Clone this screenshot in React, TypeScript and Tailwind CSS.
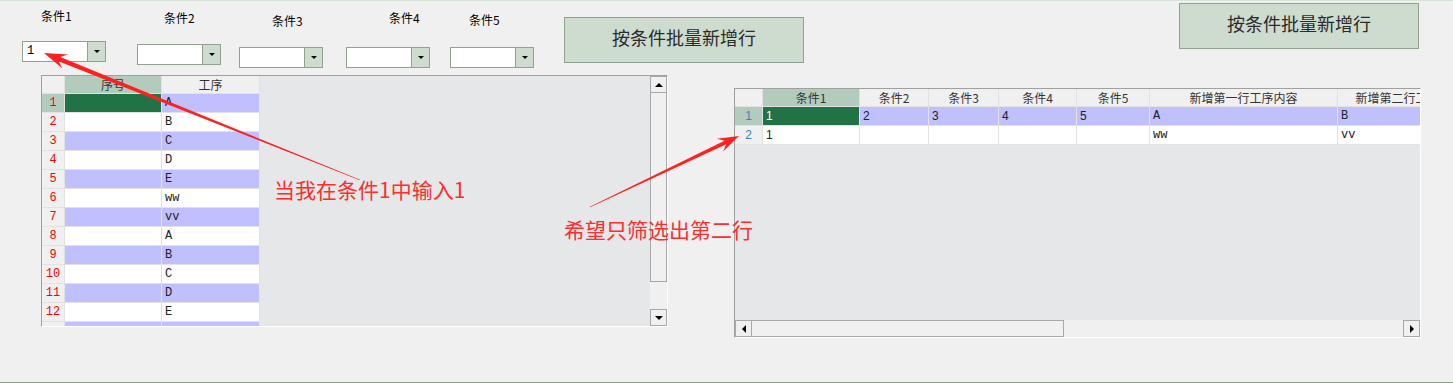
import React from 'react';

const cjk = "font-['Noto_Sans_CJK_SC','Liberation_Sans',sans-serif]";
const mono = "font-['Liberation_Mono','Noto_Sans_CJK_SC',monospace]";
const sans = "font-['Liberation_Sans','Noto_Sans_CJK_SC',sans-serif]";

// tapered annotation arrow, thin at the tail and thick near the head
function arrowPoints(x1: number, y1: number, x2: number, y2: number, tailW: number, shaftW: number, headLen: number, headW: number) {
  const len = Math.hypot(x2 - x1, y2 - y1);
  const ux = (x2 - x1) / len;
  const uy = (y2 - y1) / len;
  const nx = -uy;
  const ny = ux;
  const neck = headLen * 0.72;
  const pts = [
    [x1 + (nx * tailW) / 2, y1 + (ny * tailW) / 2],
    [x2 - ux * neck + (nx * shaftW) / 2, y2 - uy * neck + (ny * shaftW) / 2],
    [x2 - ux * headLen + (nx * headW) / 2, y2 - uy * headLen + (ny * headW) / 2],
    [x2, y2],
    [x2 - ux * headLen - (nx * headW) / 2, y2 - uy * headLen - (ny * headW) / 2],
    [x2 - ux * neck - (nx * shaftW) / 2, y2 - uy * neck - (ny * shaftW) / 2],
    [x1 - (nx * tailW) / 2, y1 - (ny * tailW) / 2],
  ];
  return pts.map((p) => p.map((v) => v.toFixed(1)).join(',')).join(' ');
}

const Combo: React.FC<{ value?: string }> = ({ value }) => (
  <div className="flex h-[21px] w-[84px] border border-[#8fa38f] bg-white">
    <div className={`flex-1 pl-[4px] text-[12px] leading-[19px] text-black ${mono}`}>{value}</div>
    <div className="flex w-[18px] items-center justify-center border-l border-[#8fa38f] bg-[#cedcd0]">
      <span className="border-x-[3px] border-t-[3px] border-x-transparent border-t-black" />
    </div>
  </div>
);

const Field: React.FC<{ label: string; value?: string; box: string; lab: string; combo: string }> = ({ label, value, box, lab, combo }) => (
  <div className={`flex w-[84px] shrink-0 flex-col ${box}`}>
    <span className={`whitespace-nowrap text-[12px] leading-[12px] text-black ${cjk} ${lab}`}>{label}</span>
    <div className={combo}>
      <Combo value={value} />
    </div>
  </div>
);

const BigButton: React.FC<{ className: string }> = ({ className }) => (
  <button
    className={`flex h-[46px] w-[240px] shrink-0 items-center justify-center border border-[#8fa38f] bg-[#cedcd0] pb-[6px] text-[18px] text-[#2b2b2b] ${cjk} ${className}`}
  >
    按条件批量新增行
  </button>
);

const Up = () => <span className="border-x-[4px] border-b-[4px] border-x-transparent border-b-black" />;
const Down = () => <span className="border-x-[4px] border-t-[4px] border-x-transparent border-t-black" />;
const Left = () => <span className="border-y-[4px] border-r-[4px] border-y-transparent border-r-black" />;
const Right = () => <span className="border-y-[4px] border-l-[4px] border-y-transparent border-l-black" />;

const VScroll = () => (
  <div className="flex w-[17px] shrink-0 flex-col bg-[#f0f0f0]">
    <div className="flex h-[17px] items-center justify-center border border-[#a8a8a8]">
      <Up />
    </div>
    <div className="h-[189px] border-x border-b border-[#a8a8a8]" />
    <div className="flex-1" />
    <div className="flex h-[17px] items-center justify-center border border-[#a8a8a8]">
      <Down />
    </div>
  </div>
);

const HScroll = () => (
  <div className="flex h-[17px] shrink-0 bg-[#f0f0f0]">
    <div className="flex w-[17px] items-center justify-center border border-[#a8a8a8]">
      <Left />
    </div>
    <div className="w-[312px] border-y border-r border-[#a8a8a8]" />
    <div className="flex-1" />
    <div className="flex w-[17px] items-center justify-center border border-[#a8a8a8]">
      <Right />
    </div>
  </div>
);

const HeadCell: React.FC<{ w: string; sel?: boolean; children?: React.ReactNode }> = ({ w, sel, children }) => (
  <div
    className={`flex h-full shrink-0 items-center justify-center overflow-hidden whitespace-nowrap border-r border-b border-[#e2e2e2] text-[12px] text-[#333] ${cjk} ${w} ${
      sel ? 'bg-[#b3cbbd]' : 'bg-[#f0f0f0]'
    }`}
  >
    {children}
  </div>
);

const Cell: React.FC<{ w: string; bg: string; children?: React.ReactNode }> = ({ w, bg, children }) => {
  const digit = /^[0-9]+$/.test(children as string);
  return (
    <div
      className={`flex h-full shrink-0 items-center overflow-hidden whitespace-nowrap border-r border-b border-[#e2e2e2] pl-[3px] ${w} ${bg} ${
        digit ? `text-[12px] ${sans}` : `text-[12px] ${mono}`
      } ${bg === 'bg-[#217346]' ? 'text-white' : 'text-[#222]'}`}
    >
      {children}
    </div>
  );
};

// the 13th row only peeks in at the bottom edge, so it shows no text
const leftRows = ['A', 'B', 'C', 'D', 'E', 'ww', 'vv', 'A', 'B', 'C', 'D', 'E', ''];

const LeftGrid = () => (
  <div className="ml-[41px] flex h-[252px] w-[627px] shrink-0 border border-[#a0a0a0] border-r-white border-b-white">
    <div className="flex-1 overflow-hidden bg-[#e6e7e9]">
      <div className="flex h-[18px]">
        <HeadCell w="w-[23px]" />
        <HeadCell w="w-[97px]" sel>
          序号
        </HeadCell>
        <HeadCell w="w-[98px]">工序</HeadCell>
      </div>
      {leftRows.map((v, i) => {
        const bg = i % 2 === 0 ? 'bg-[#c0c0ff]' : 'bg-white';
        return (
          <div key={i} className="flex h-[19px]">
            <div
              className={`flex h-full w-[23px] shrink-0 items-center justify-center border-r border-b border-[#e2e2e2] text-[12px] text-[#ff0000] ${mono} ${
                i === 0 ? 'bg-[#b3cbbd]' : 'bg-[#f0f0f0]'
              }`}
            >
              {i < 12 ? i + 1 : ''}
            </div>
            <Cell w="w-[97px]" bg={i === 0 ? 'bg-[#217346]' : bg} />
            <Cell w="w-[98px]" bg={bg}>
              {v}
            </Cell>
          </div>
        );
      })}
    </div>
    <VScroll />
  </div>
);

const rightCols = [
  { name: '条件1', w: 'w-[97px]' },
  { name: '条件2', w: 'w-[69px]' },
  { name: '条件3', w: 'w-[70px]' },
  { name: '条件4', w: 'w-[78px]' },
  { name: '条件5', w: 'w-[73px]' },
  { name: '新增第一行工序内容', w: 'w-[188px]' },
  { name: '新增第二行工序内容', w: 'w-[144px]' },
];

const rightRows = [
  ['1', '2', '3', '4', '5', 'A', 'B'],
  ['1', '', '', '', '', 'ww', 'vv'],
];

const RightGrid = () => (
  <div className="ml-[66px] mt-[13px] flex h-[250px] w-[687px] shrink-0 flex-col border border-[#a0a0a0] border-r-white border-b-white">
    <div className="flex-1 overflow-hidden bg-[#e6e7e9]">
      <div className="flex h-[18px]">
        <HeadCell w="w-[28px]" />
        {rightCols.map((c, i) => (
          <HeadCell key={c.name} w={c.w} sel={i === 0}>
            {c.name}
          </HeadCell>
        ))}
      </div>
      {rightRows.map((row, r) => {
        const bg = r === 0 ? 'bg-[#c0c0ff]' : 'bg-white';
        return (
          <div key={r} className="flex h-[19px]">
            <div
              className={`flex h-full w-[28px] shrink-0 items-center justify-center border-r border-b border-[#e2e2e2] text-[12px] text-[#3f7fbf] ${sans} ${
                r === 0 ? 'bg-[#b3cbbd]' : 'bg-[#f0f0f0]'
              }`}
            >
              {r + 1}
            </div>
            {row.map((v, c) => (
              <Cell key={c} w={rightCols[c].w} bg={r === 0 && c === 0 ? 'bg-[#217346]' : bg}>
                {v}
              </Cell>
            ))}
          </div>
        );
      })}
    </div>
    <HScroll />
  </div>
);

export default function App() {
  return (
    <div className="relative h-[383px] w-[1453px] overflow-hidden border-t border-b border-t-[#d9e5d9] border-b-[#8a9f8a] bg-[#f0f0f0]">
      <div className="flex h-[74px] items-start">
        <Field label="条件1" value="1" box="ml-[22px]" lab="ml-[19px] mt-[9px]" combo="mt-[19px]" />
        <Field label="条件2" box="ml-[31px]" lab="ml-[27px] mt-[11px]" combo="mt-[20px]" />
        <Field label="条件3" box="ml-[18px]" lab="ml-[33px] mt-[14px]" combo="mt-[20px]" />
        <Field label="条件4" box="ml-[23px]" lab="ml-[43px] mt-[11px]" combo="mt-[23px]" />
        <Field label="条件5" box="ml-[20px]" lab="ml-[19px] mt-[13px]" combo="mt-[21px]" />
        <BigButton className="ml-[30px] mt-[16px]" />
        <BigButton className="ml-[375px] mt-[2px]" />
      </div>

      <div className="flex items-start">
        <LeftGrid />
        <RightGrid />
      </div>

      <svg className="pointer-events-none absolute left-0 -top-px" width="1453" height="383">
        <polygon points={arrowPoints(360, 180, 44, 53, 0.4, 4.5, 23, 15)} fill="#ff2020" />
        <polygon points={arrowPoints(590, 207, 739, 136, 0.4, 4, 21, 14)} fill="#ff2020" />
      </svg>

      <span className={`absolute left-[274px] top-[178px] whitespace-nowrap text-[21px] leading-none text-[#ff2d2d] ${cjk}`}>
        当我在条件1中输入1
      </span>
      <span className={`absolute left-[564px] top-[218px] whitespace-nowrap text-[21px] leading-none text-[#ff2d2d] ${cjk}`}>
        希望只筛选出第二行
      </span>
    </div>
  );
}
